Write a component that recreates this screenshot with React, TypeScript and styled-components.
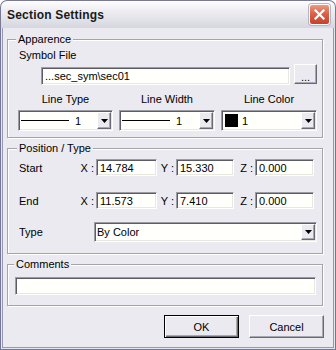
import styled, { createGlobalStyle } from 'styled-components';

const GlobalStyle = createGlobalStyle`
  * { box-sizing: border-box; }
  html, body { margin: 0; padding: 0; background: #ffffff; }
  body {
    font-family: 'Liberation Sans', Arial, sans-serif;
    font-size: 11px;
    color: #000;
  }
`;

const FACE = '#ebeaf0';

const Window = styled.div`
  width: 336px;
  height: 350px;
  display: flex;
  flex-direction: column;
`;

const TitleBar = styled.div`
  flex: none;
  height: 28px;
  display: flex;
  align-items: center;
  justify-content: space-between;
  padding: 0 5px 0 6px;
  border: 1px solid #7a7a96;
  border-bottom: none;
  border-radius: 7px 7px 0 0;
  background: linear-gradient(
    to bottom,
    #ffffff 0%,
    #f5f5f8 18%,
    #e7e7ed 55%,
    #d6d6df 100%
  );
`;

const Title = styled.span`
  font-weight: bold;
  font-size: 12px;
  letter-spacing: 0.2px;
  color: #1a1a1a;
`;

const CloseButton = styled.div`
  width: 21px;
  height: 21px;
  display: flex;
  align-items: center;
  justify-content: center;
  border: 1px solid #ffffff;
  border-radius: 3px;
  background: linear-gradient(to bottom, #ec9a82 0%, #dc6248 45%, #c5412a 100%);
  box-shadow: 0 0 0 1px #b4b4c4;
`;

const Body = styled.div`
  flex: 1;
  display: flex;
  flex-direction: column;
  padding: 0 3px 3px 3px;
  background: ${FACE};
  border: 1px solid #75759a;
  border-top: none;
  box-shadow:
    inset 1px 0 #e6e6ef,
    inset -1px 0 #e6e6ef,
    inset 0 -1px #e6e6ef,
    inset 2px 0 #9898b4,
    inset -2px 0 #9898b4,
    inset 0 -2px #9898b4;
`;

const GroupBox = styled.div<{ $mt: number; $h: number; $pad: string }>`
  position: relative;
  flex: none;
  margin: ${({ $mt }) => $mt}px 0 0 3px;
  width: 316px;
  height: ${({ $h }) => $h}px;
  padding: ${({ $pad }) => $pad};
  border: 1px solid #a4a4ac;
  box-shadow: inset 1px 1px #ffffff, 1px 1px #ffffff;
`;

const Legend = styled.span<{ $x: number }>`
  position: absolute;
  top: -7px;
  left: ${({ $x }) => $x}px;
  padding: 0 2px;
  line-height: 13px;
  background: ${FACE};
`;

const Label = styled.div`
  line-height: 13px;
`;

const FileRow = styled.div`
  display: flex;
  align-items: flex-start;
  margin-top: 2px;
`;

const TextBox = styled.input<{ $w: number; $h: number }>`
  display: block;
  flex: none;
  width: ${({ $w }) => $w}px;
  height: ${({ $h }) => $h}px;
  margin: 0;
  padding: 0 2px 0 3px;
  font: inherit;
  color: #000;
  background: #fffffb;
  border: 1px solid;
  border-color: #9c9ca4 #ffffff #ffffff #9c9ca4;
  box-shadow: inset 1px 1px #5c5c64, inset -1px -1px #e8e8de;
  outline: none;
`;

const FileBox = styled(TextBox)`
  margin: 3px 0 0 22px;
`;

const PushButton = styled.button<{ $default?: boolean; $w: number; $h: number }>`
  flex: none;
  width: ${({ $w }) => $w}px;
  height: ${({ $h }) => $h}px;
  margin: 0;
  padding: 0;
  font: inherit;
  color: #000;
  background: ${FACE};
  border: 1px solid;
  border-color: ${({ $default }) =>
    $default ? '#000000' : '#ffffff #6a6a72 #6a6a72 #ffffff'};
  box-shadow: ${({ $default }) =>
    $default
      ? 'inset 1px 1px #ffffff, inset -1px -1px #6a6a72, inset -2px -2px #a8a8b0'
      : 'inset -1px -1px #a8a8b0'};
`;

const DotsButton = styled(PushButton)`
  margin-left: 4px;
  line-height: 20px;
  padding-top: 2px;
`;

const ComboGrid = styled.div`
  display: grid;
  grid-template-columns: 95px 96px 96px;
  column-gap: 6px;
  margin: 8px 0 0 -1px;
`;

const ComboCell = styled.div`
  display: flex;
  flex-direction: column;
  align-items: center;
  gap: 4px;
`;

const Combo = styled.div<{ $w?: number; $h: number }>`
  display: flex;
  align-items: stretch;
  width: ${({ $w }) => ($w ? `${$w}px` : '100%')};
  height: ${({ $h }) => $h}px;
  padding: 1px;
  background: #fffffb;
  border: 1px solid;
  border-color: #9c9ca4 #ffffff #ffffff #9c9ca4;
  box-shadow: inset 1px 1px #5c5c64, inset -1px -1px #e8e8de;
`;

const ComboValue = styled.div<{ $pad: number }>`
  flex: 1;
  display: flex;
  align-items: center;
  padding-left: ${({ $pad }) => $pad}px;
  white-space: nowrap;
`;

const LineSample = styled.span`
  width: 48px;
  height: 1px;
  background: #000;
  margin-right: 6px;
`;

const Swatch = styled.span`
  width: 13px;
  height: 13px;
  background: #000;
  margin-right: 4px;
`;

const DropButton = styled.div`
  flex: none;
  width: 14px;
  display: flex;
  align-items: center;
  justify-content: center;
  background: ${FACE};
  border: 1px solid;
  border-color: #ffffff #6a6a72 #6a6a72 #ffffff;
  box-shadow: inset -1px -1px #a8a8b0;
`;

const CoordRow = styled.div<{ $mt: number; $h: number }>`
  display: flex;
  align-items: center;
  height: ${({ $h }) => $h}px;
  margin-top: ${({ $mt }) => $mt}px;
`;

const RowLabel = styled.span<{ $w: number }>`
  flex: none;
  width: ${({ $w }) => $w}px;
`;

const AxisLabel = styled.span<{ $w: number }>`
  flex: none;
  width: ${({ $w }) => $w}px;
  padding-right: 2px;
  text-align: right;
`;

const ButtonRow = styled.div`
  display: flex;
  justify-content: flex-end;
  gap: 10px;
  margin-top: 9px;
  padding-right: 8px;
`;

const Arrow = () => (
  <svg width="7" height="4" viewBox="0 0 7 4">
    <polygon points="0,0 7,0 3.5,4" fill="#000" />
  </svg>
);

const Coord = ({
  label,
  x,
  y,
  z,
  mt,
}: {
  label: string;
  x: string;
  y: string;
  z: string;
  mt: number;
}) => (
  <CoordRow $mt={mt} $h={17}>
    <RowLabel $w={59}>{label}</RowLabel>
    <AxisLabel $w={18}>X :</AxisLabel>
    <TextBox $w={61} $h={17} readOnly value={x} />
    <AxisLabel $w={19}>Y :</AxisLabel>
    <TextBox $w={58} $h={17} readOnly value={y} />
    <AxisLabel $w={21}>Z :</AxisLabel>
    <TextBox $w={59} $h={17} readOnly value={z} />
  </CoordRow>
);

const App = () => {
  return (
    <>
      <GlobalStyle />
      <Window>
        <TitleBar>
          <Title>Section Settings</Title>
          <CloseButton>
            <svg width="11" height="11" viewBox="0 0 11 11">
              <path
                d="M1.5 1.5 L9.5 9.5 M9.5 1.5 L1.5 9.5"
                stroke="#fff"
                strokeWidth="2.2"
                strokeLinecap="square"
              />
            </svg>
          </CloseButton>
        </TitleBar>
        <Body>
          <GroupBox $mt={11} $h={99} $pad="9px 0 0 11px">
            <Legend $x={8}>Apparence</Legend>
            <Label>Symbol File</Label>
            <FileRow>
              <FileBox $w={249} $h={18} readOnly value={'...sec_sym\\sec01'} />
              <DotsButton $w={23} $h={20}>...</DotsButton>
            </FileRow>
            <ComboGrid>
              <ComboCell>
                <Label>Line Type</Label>
                <Combo $h={21}>
                  <ComboValue $pad={1}>
                    <LineSample />1
                  </ComboValue>
                  <DropButton>
                    <Arrow />
                  </DropButton>
                </Combo>
              </ComboCell>
              <ComboCell>
                <Label>Line Width</Label>
                <Combo $h={21}>
                  <ComboValue $pad={1}>
                    <LineSample />1
                  </ComboValue>
                  <DropButton>
                    <Arrow />
                  </DropButton>
                </Combo>
              </ComboCell>
              <ComboCell>
                <Label>Line Color</Label>
                <Combo $h={21}>
                  <ComboValue $pad={2}>
                    <Swatch />1
                  </ComboValue>
                  <DropButton>
                    <Arrow />
                  </DropButton>
                </Combo>
              </ComboCell>
            </ComboGrid>
          </GroupBox>

          <GroupBox $mt={10} $h={106} $pad="10px 0 0 11px">
            <Legend $x={9}>Position / Type</Legend>
            <Coord label="Start" x="14.784" y="15.330" z="0.000" mt={0} />
            <Coord label="End" x="11.573" y="7.410" z="0.000" mt={16} />
            <CoordRow $mt={13} $h={20}>
              <RowLabel $w={75}>Type</RowLabel>
              <Combo $w={223} $h={20}>
                <ComboValue $pad={1}>By Color</ComboValue>
                <DropButton>
                  <Arrow />
                </DropButton>
              </Combo>
            </CoordRow>
          </GroupBox>

          <GroupBox $mt={10} $h={42} $pad="12px 0 0 7px">
            <Legend $x={6}>Comments</Legend>
            <TextBox $w={301} $h={18} readOnly value="" />
          </GroupBox>

          <ButtonRow>
            <PushButton $default $w={75} $h={23}>
              OK
            </PushButton>
            <PushButton $w={75} $h={23}>
              Cancel
            </PushButton>
          </ButtonRow>
        </Body>
      </Window>
    </>
  );
};

export default App;
